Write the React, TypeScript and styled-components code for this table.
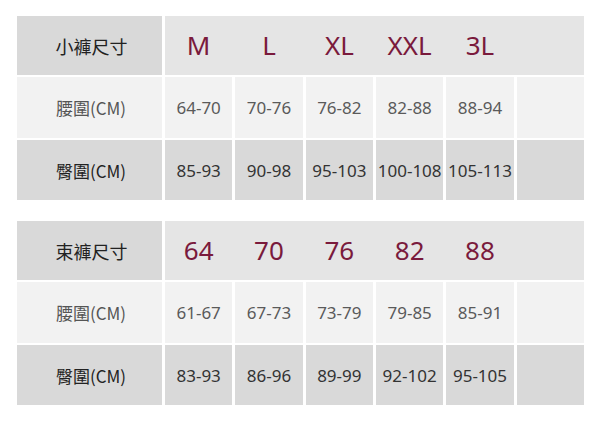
import React from 'react';
import styled, { createGlobalStyle } from 'styled-components';

const GlobalStyle = createGlobalStyle`
  body {
    margin: 0;
    background: #ffffff;
    font-family: "Noto Sans", "Noto Sans CJK TC", sans-serif;
  }
`;

const Page = styled.div`
  width: 600px;
  padding: 16px 0 0 17px;
  box-sizing: border-box;
  display: flex;
  flex-direction: column;
  gap: 21px;
`;

const Table = styled.div`
  width: 567px;
  display: grid;
  grid-template-columns: 145px repeat(6, 1fr);
  grid-template-rows: 59px 61px 60px;
  column-gap: 3px;
  row-gap: 2px;
`;

const HeadLabel = styled.div`
  background: #d9d9d9;
  display: flex;
  align-items: center;
  justify-content: center;
  font-family: "Noto Sans CJK TC", sans-serif;
  font-size: 18px;
  color: #222;
  padding-left: 4px;
`;

const HeadValues = styled.div`
  grid-column: 2 / span 6;
  background: #e5e5e5;
  display: grid;
  grid-template-columns: repeat(6, 1fr);
  column-gap: 3px;
`;

const HeadValue = styled.div`
  display: flex;
  align-items: center;
  justify-content: center;
  font-size: 26px;
  color: #7a1a3c;
  padding-bottom: 2px;
`;

const Label = styled.div<{ $dark?: boolean }>`
  background: ${p => (p.$dark ? '#d9d9d9' : '#f2f2f2')};
  display: flex;
  align-items: center;
  justify-content: center;
  font-family: "Noto Sans CJK TC", sans-serif;
  font-size: 17px;
  color: ${p => (p.$dark ? '#222' : '#555')};
  padding-left: 3px;
`;

const Cell = styled.div<{ $dark?: boolean }>`
  background: ${p => (p.$dark ? '#d9d9d9' : '#f2f2f2')};
  display: flex;
  align-items: center;
  justify-content: center;
  font-size: 17px;
  color: ${p => (p.$dark ? '#333' : '#5a5a5a')};
  white-space: nowrap;
`;

type SizeTable = {
  title: string;
  sizes: string[];
  waist: string[];
  hip: string[];
};

const tables: SizeTable[] = [
  {
    title: '小褲尺寸',
    sizes: ['M', 'L', 'XL', 'XXL', '3L'],
    waist: ['64-70', '70-76', '76-82', '82-88', '88-94'],
    hip: ['85-93', '90-98', '95-103', '100-108', '105-113'],
  },
  {
    title: '束褲尺寸',
    sizes: ['64', '70', '76', '82', '88'],
    waist: ['61-67', '67-73', '73-79', '79-85', '85-91'],
    hip: ['83-93', '86-96', '89-99', '92-102', '95-105'],
  },
];

const pad = (list: string[]) => [...list, ''];

const App: React.FC = () => (
  <>
    <GlobalStyle />
    <Page>
      {tables.map(t => (
        <Table key={t.title}>
          <HeadLabel>{t.title}</HeadLabel>
          <HeadValues>
            {pad(t.sizes).map((s, i) => (
              <HeadValue key={i}>{s}</HeadValue>
            ))}
          </HeadValues>
          <Label>腰圍(CM)</Label>
          {pad(t.waist).map((v, i) => (
            <Cell key={'w' + i}>{v}</Cell>
          ))}
          <Label $dark>臀圍(CM)</Label>
          {pad(t.hip).map((v, i) => (
            <Cell $dark key={'h' + i}>{v}</Cell>
          ))}
        </Table>
      ))}
    </Page>
  </>
);

export default App;
